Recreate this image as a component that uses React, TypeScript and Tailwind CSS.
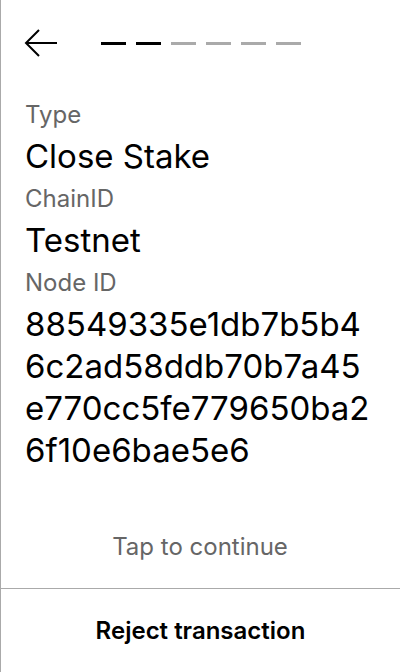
import React from "react";

const Field = ({ label, value, first }: { label: string; value: React.ReactNode; first?: boolean }) => (
  <div className={first ? "flex flex-col" : "flex flex-col mt-[2px]"}>
    <div className="text-[24px] leading-[40px] text-[#666666]">{label}</div>
    <div className="text-[33px] leading-[42px] text-black">{value}</div>
  </div>
);

export default function App() {
  return (
    <div
      className="w-[400px] h-[672px] bg-white border-l border-[#aaaaaa] flex flex-col overflow-hidden"
      style={{ fontFamily: "Inter, 'Noto Sans', sans-serif" }}
    >
      <div className="h-[86px] flex items-center pl-[23px] shrink-0">
        <svg width="34" height="30" viewBox="0 0 34 30" fill="none" className="shrink-0">
          <path d="M2 15 H33" stroke="black" strokeWidth="2" />
          <path d="M15 2 L2 15 L15 28" stroke="black" strokeWidth="2" strokeLinejoin="miter" />
        </svg>
        <div className="ml-[43px] flex gap-[10px]">
          <div className="w-[25px] h-[3px] bg-black" />
          <div className="w-[25px] h-[3px] bg-black" />
          <div className="w-[25px] h-[3px] bg-[#aaaaaa]" />
          <div className="w-[25px] h-[3px] bg-[#aaaaaa]" />
          <div className="w-[25px] h-[3px] bg-[#aaaaaa]" />
          <div className="w-[25px] h-[3px] bg-[#aaaaaa]" />
        </div>
      </div>
      <div className="flex-1 flex flex-col pl-6 mt-[9px]">
        <Field first label="Type" value="Close Stake" />
        <Field label="ChainID" value="Testnet" />
        <Field
          label="Node ID"
          value={
            <>
              <span className="block">88549335e1db7b5b4</span>
              <span className="block">6c2ad58ddb70b7a45</span>
              <span className="block">e770cc5fe779650ba2</span>
              <span className="block">6f10e6bae5e6</span>
            </>
          }
        />
      </div>
      <div className="text-center text-[24px] leading-[32px] text-[#666666] mb-[25px] pr-px">Tap to continue</div>
      <div className="h-[84px] border-t border-[#aaaaaa] flex items-center justify-center shrink-0">
        <span className="text-[24px] font-semibold text-black">Reject transaction</span>
      </div>
    </div>
  );
}
